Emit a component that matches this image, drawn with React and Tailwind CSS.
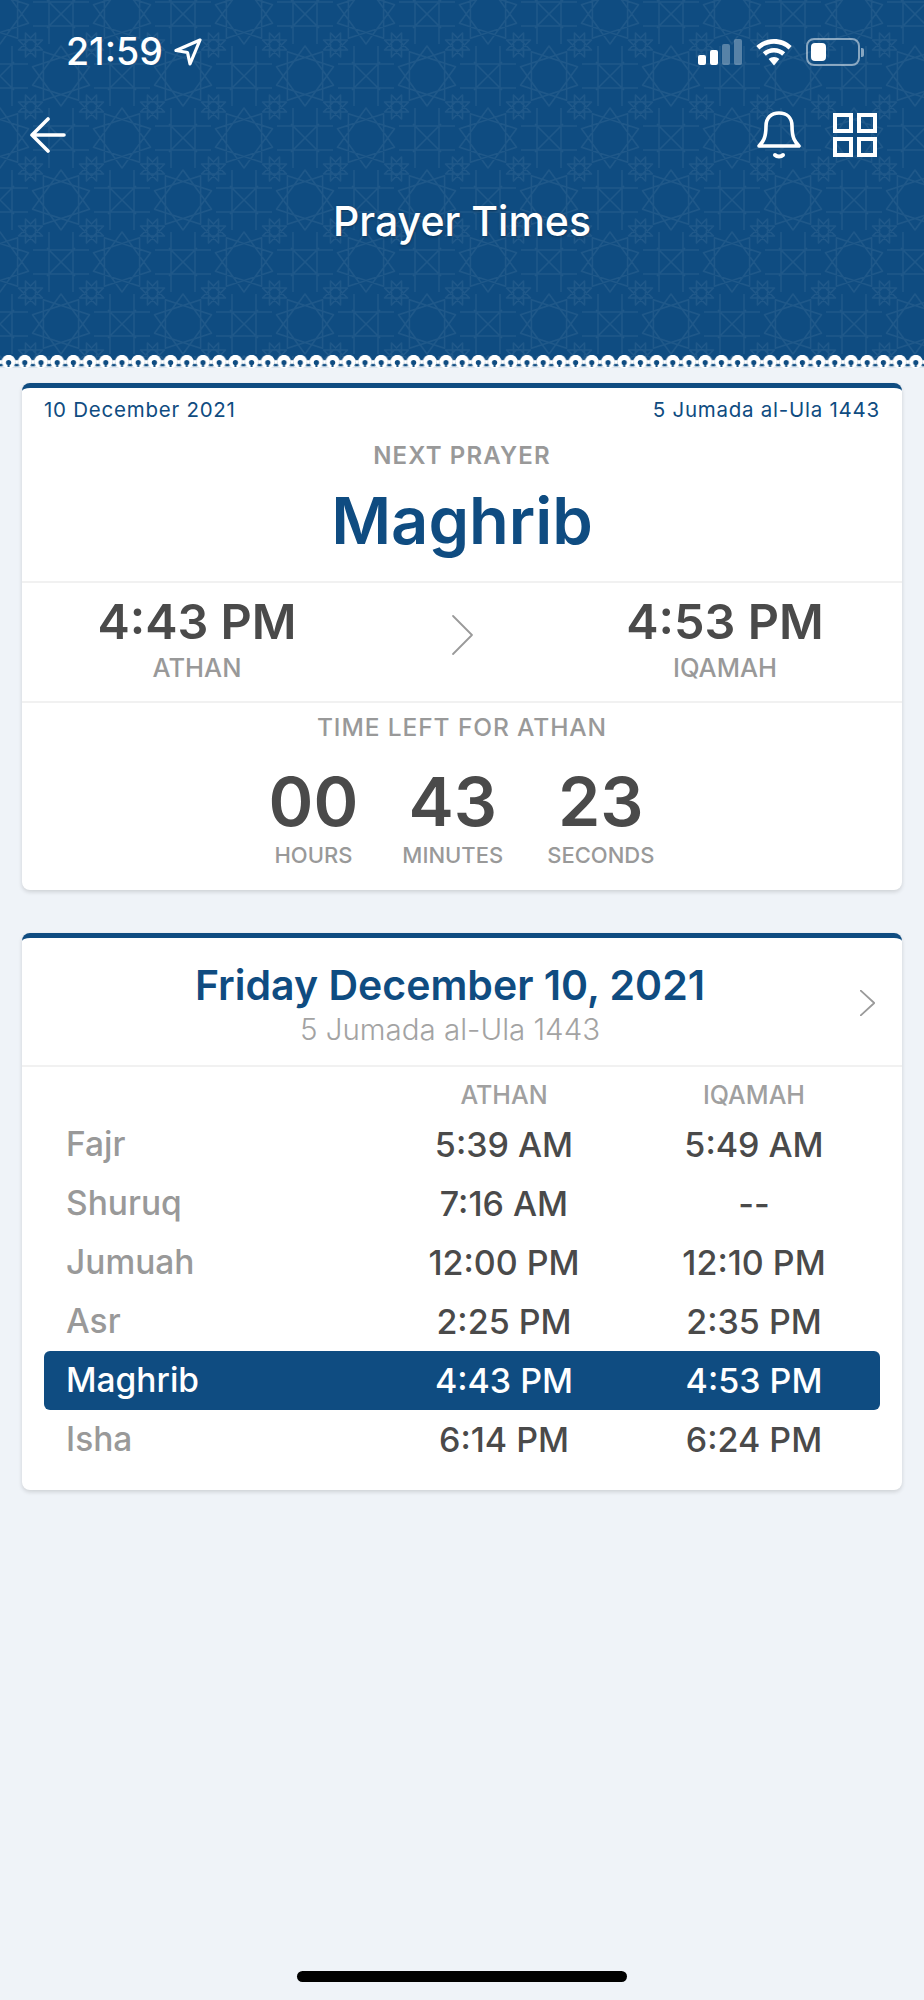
const BLUE = '#0f4c81';

function starPath(cx, cy, r, n, k, rot = 0) {
  let d = '';
  let i = 0;
  const steps = n;
  for (let s = 0; s < steps; s++) {
    const a = rot + (i * 2 * Math.PI) / n;
    d += `${s === 0 ? 'M' : 'L'}${(cx + r * Math.cos(a)).toFixed(1)} ${(cy + r * Math.sin(a)).toFixed(1)}`;
    i = (i + k) % n;
  }
  return d + 'Z';
}

function PatternBg() {
  const rosettes = [[0, 0], [122, 0], [0, 124], [122, 124], [61, 62]];
  const crosses = [[61, 0], [61, 124], [0, 62], [122, 62]];
  const mids = [[30.5, 31], [91.5, 31], [30.5, 93], [91.5, 93]];
  return (
    <svg className="absolute inset-0 w-full h-full" aria-hidden="true">
      <defs>
        <pattern id="geo" x="0" y="14" width="122" height="124" patternUnits="userSpaceOnUse">
          <g fill="none" stroke="#ffffff" strokeOpacity="0.065" strokeWidth="1.5" strokeLinejoin="round">
            {rosettes.map(([x, y], i) => (
              <path key={i} d={starPath(x, y, 30, 10, 3, Math.PI / 10)} />
            ))}
            {crosses.map(([x, y], i) => (
              <path
                key={i}
                d={`M${x - 28} ${y - 12}H${x + 28}M${x - 28} ${y + 12}H${x + 28}M${x - 12} ${y - 30}V${y + 30}M${x + 12} ${y - 30}V${y + 30}M${x - 14} ${y - 14}L${x + 14} ${y + 14}M${x + 14} ${y - 14}L${x - 14} ${y + 14}`}
              />
            ))}
            {mids.map(([x, y], i) => (
              <path key={i} d={starPath(x, y, 13, 8, 3, Math.PI / 8)} />
            ))}
          </g>
        </pattern>
      </defs>
      <rect width="100%" height="100%" fill="url(#geo)" />
    </svg>
  );
}

function Scallop() {
  return (
    <svg className="absolute left-0 bottom-0 w-full h-[13px]" aria-hidden="true">
      <defs>
        <pattern id="scal" x="0.5" y="0" width="16.2" height="13" patternUnits="userSpaceOnUse">
          <rect x="0" y="10.5" width="16.2" height="2.5" fill="#ffffff" fillOpacity="0.85" />
          <circle cx="8.1" cy="6.6" r="6.8" fill="#ffffff" />
          <path d="M-1 6L1.6 4.5L1.6 9L-1 10.500zM17.2 6L14.6 4.5L14.6 9L17.2 10.500z" fill="#ffffff" />
          <path d="M-2 11.2L0 8.2L2 11.2zM14.2 11.2L16.2 8.2L18.2 11.2z" fill={BLUE} />
          <circle cx="8.1" cy="7.6" r="2.6" fill={BLUE} />
          <path d="M7.1 8.5h2V12h-2z" fill={BLUE} />
        </pattern>
      </defs>
      <rect width="100%" height="13" fill="url(#scal)" />
    </svg>
  );
}

function Chevron({ className }) {
  return (
    <svg viewBox="0 0 20 40" className={className} fill="none" stroke="#9a9a9a" strokeWidth="1.8" strokeLinecap="round" strokeLinejoin="round" preserveAspectRatio="none">
      <path d="M1 1L19 20L1 39" vectorEffect="non-scaling-stroke" />
    </svg>
  );
}

function StatusBar() {
  return (
    <div className="relative flex items-center h-[30px] pl-[66px] pr-[60px]">
      <span className="text-[37.5px] leading-[30px] font-medium text-white tracking-[0px]">21:59</span>
      <svg viewBox="0 0 28 28" className="w-[28px] h-[28px] ml-[11px]" fill="none" stroke="#fff" strokeWidth="3.2" strokeLinejoin="round">
        <path d="M26 2L2 12.5L13.5 14.5L16 26Z" />
      </svg>
      <div className="ml-auto flex items-center">
        <div className="flex items-end gap-[4px] h-[26px]">
          <span className="w-[8px] h-[10px] rounded-[2px] bg-white" />
          <span className="w-[8px] h-[15px] rounded-[2px] bg-white" />
          <span className="w-[8px] h-[21px] rounded-[2px] bg-white/30" />
          <span className="w-[8px] h-[26px] rounded-[2px] bg-white/30" />
        </div>
        <svg viewBox="0 0 36 27" className="w-[36px] h-[27px] ml-[14px]" fill="#fff">
          <path d="M18 0C11.200 0 5 2.600 0.300 7L3.400 10.400C7.200 6.900 12.300 4.700 18 4.700C23.700 4.700 28.800 6.900 32.600 10.400L35.700 7C31 2.600 24.800 0 18 0Z" />
          <path d="M18 9C13.700 9 9.800 10.600 6.800 13.300L9.900 16.700C12 14.800 14.900 13.600 18 13.600C21.100 13.600 24 14.800 26.100 16.700L29.200 13.300C26.200 10.600 22.300 9 18 9Z" />
          <path d="M18 18C15.900 18 14.100 18.700 12.600 20L18 26.500L23.400 20C21.900 18.700 20.100 18 18 18Z" />
        </svg>
        <div className="ml-[14px] flex items-center">
          <div className="w-[54px] h-[28px] rounded-[8px] border-2 border-white/50 p-[3px]">
            <div className="w-[15px] h-full rounded-[4px] bg-white" />
          </div>
          <div className="w-[3px] h-[9px] rounded-r-[2px] bg-white/50 ml-[1px]" />
        </div>
      </div>
    </div>
  );
}

function NavRow() {
  return (
    <div className="relative flex items-center justify-between h-[48px] mt-[44px] pl-[30px] pr-[47px]">
      <svg viewBox="0 0 36 36" className="w-[36px] h-[36px]" fill="none" stroke="#fff" strokeWidth="3.6" strokeLinecap="round" strokeLinejoin="round">
        <path d="M34 18H2M18 2L2 18L18 34" />
      </svg>
      <div className="flex items-center gap-[32px]">
        <svg viewBox="0 0 44 48" className="w-[44px] h-[48px]" fill="none" stroke="#fff" strokeWidth="3.6" strokeLinecap="round" strokeLinejoin="round">
          <path d="M2 35C6 31 9 27 9 15C9 7 14 2 22 2C30 2 35 7 35 15C35 27 38 31 42 35Z" />
          <path d="M18 44C20 46 24 46 26 44" strokeWidth="4" />
        </svg>
        <svg viewBox="0 0 44 44" className="w-[44px] h-[44px]" fill="none" stroke="#fff" strokeWidth="4">
          <rect x="2" y="2" width="16" height="16" />
          <rect x="26" y="2" width="16" height="16" />
          <rect x="2" y="26" width="16" height="16" />
          <rect x="26" y="26" width="16" height="16" />
        </svg>
      </div>
    </div>
  );
}

function Header() {
  return (
    <div className="relative h-[368px] bg-[#0f4c81] pt-[37px] shrink-0 overflow-hidden">
      <PatternBg />
      <Scallop />
      <StatusBar />
      <NavRow />
      <h1 className="relative mt-[37px] h-[50px] leading-[50px] text-center text-[41px] font-medium text-white [text-shadow:0_1px_3px_rgba(0,0,0,0.35)]">
        Prayer Times
      </h1>
    </div>
  );
}

function NextPrayerCard() {
  return (
    <section className="mx-[22px] mt-[15px] rounded-[8px] border-t-[5px] border-[#0f4c81] bg-white shadow-[0_2px_4px_rgba(0,0,0,0.14)]">
      <div className="flex items-center justify-between h-[44px] px-[22px] text-[20.5px] leading-[24px] text-[#0f4c81] tracking-[0.75px]">
        <span>10 December 2021</span>
        <span>5 Jumada al-Ula 1443</span>
      </div>
      <div className="text-center border-b-2 border-[#f1f1f1]">
        <div className="h-[48px] leading-[48px] text-[24px] font-semibold text-[#999999] tracking-[1.15px]">NEXT PRAYER</div>
        <div className="h-[82px] leading-[82px] text-[65px] font-semibold text-[#0f4c81]">Maghrib</div>
        <div className="h-[19px]" />
      </div>
      <div className="flex items-center border-b-2 border-[#f1f1f1] pt-[6px] pb-[20px]">
        <div className="w-[350px] text-center">
          <div className="h-[66px] leading-[66px] text-[48.5px] font-semibold text-[#4a4a4a]">4:43 PM</div>
          <div className="h-[26px] leading-[26px] text-[25.5px] font-medium text-[#999999]">ATHAN</div>
        </div>
        <div className="flex-1 flex justify-center">
          <Chevron className="w-[21px] h-[40px]" />
        </div>
        <div className="w-[350px] pr-[4px] text-center">
          <div className="h-[66px] leading-[66px] text-[48.5px] font-semibold text-[#4a4a4a]">4:53 PM</div>
          <div className="h-[26px] leading-[26px] text-[25.5px] font-medium text-[#999999]">IQAMAH</div>
        </div>
      </div>
      <div className="h-[48px] leading-[48px] text-center text-[24.5px] font-medium text-[#999999] tracking-[0.9px]">TIME LEFT FOR ATHAN</div>
      <div className="flex justify-center gap-[44px] mt-[10px] pb-[21px] pr-[1px]">
        {[['00', 'HOURS'], ['43', 'MINUTES'], ['23', 'SECONDS']].map(([n, l]) => (
          <div key={l} className="flex flex-col items-center min-w-[87px]">
            <div className="h-[80px] leading-[80px] text-[68px] font-semibold text-[#4a4a4a]">{n}</div>
            <div className="h-[28px] leading-[28px] text-[22px] font-medium text-[#999999]">{l}</div>
          </div>
        ))}
      </div>
    </section>
  );
}

const rows = [
  ['Fajr', '5:39 AM', '5:49 AM'],
  ['Shuruq', '7:16 AM', '--'],
  ['Jumuah', '12:00 PM', '12:10 PM'],
  ['Asr', '2:25 PM', '2:35 PM'],
  ['Maghrib', '4:43 PM', '4:53 PM', true],
  ['Isha', '6:14 PM', '6:24 PM'],
];

function TimesCard() {
  return (
    <section className="mx-[22px] mt-[43px] rounded-[8px] border-t-[5px] border-[#0f4c81] bg-white shadow-[0_2px_4px_rgba(0,0,0,0.14)]">
      <div className="relative border-b-2 border-[#f1f1f1] pt-[22px] pb-[17px] pr-[24px] text-center">
        <div className="h-[50px] leading-[50px] text-[41px] font-semibold text-[#0f4c81]">Friday December 10, 2021</div>
        <div className="h-[38px] leading-[38px] text-[29.5px] font-light text-[#a3a3a3]">5 Jumada al-Ula 1443</div>
        <Chevron className="absolute right-[27px] top-[52px] w-[15px] h-[26px]" />
      </div>
      <div className="px-[22px] pt-[9px] pb-[21px]">
        <div className="grid grid-cols-[335px_250px_250px] h-[39px] items-center text-center text-[25px] font-medium text-[#a0a0a0]">
          <span />
          <span>ATHAN</span>
          <span>IQAMAH</span>
        </div>
        {rows.map(([name, a, b, active]) => (
          <div
            key={name}
            className={
              active
                ? 'grid grid-cols-[335px_250px_250px] h-[59px] items-center text-[34px] font-medium text-white bg-[#0f4c81] rounded-[6px]'
                : 'grid grid-cols-[335px_250px_250px] h-[59px] items-center text-[34px] font-medium text-[#4a4a4a]'
            }
          >
            <span className={active ? 'pl-[22px] text-[33.5px]' : 'pl-[22px] text-[33.5px] text-[#999999]'}>{name}</span>
            <span className="text-center">{a}</span>
            <span className="text-center">{b}</span>
          </div>
        ))}
      </div>
    </section>
  );
}

export default function App() {
  return (
    <div className="flex flex-col h-[2000px] bg-[#eff3f8] overflow-hidden font-['Inter',sans-serif]">
      <Header />
      <NextPrayerCard />
      <TimesCard />
      <div className="mt-auto mb-[18px] mx-auto w-[330px] h-[11px] rounded-full bg-black" />
    </div>
  );
}
